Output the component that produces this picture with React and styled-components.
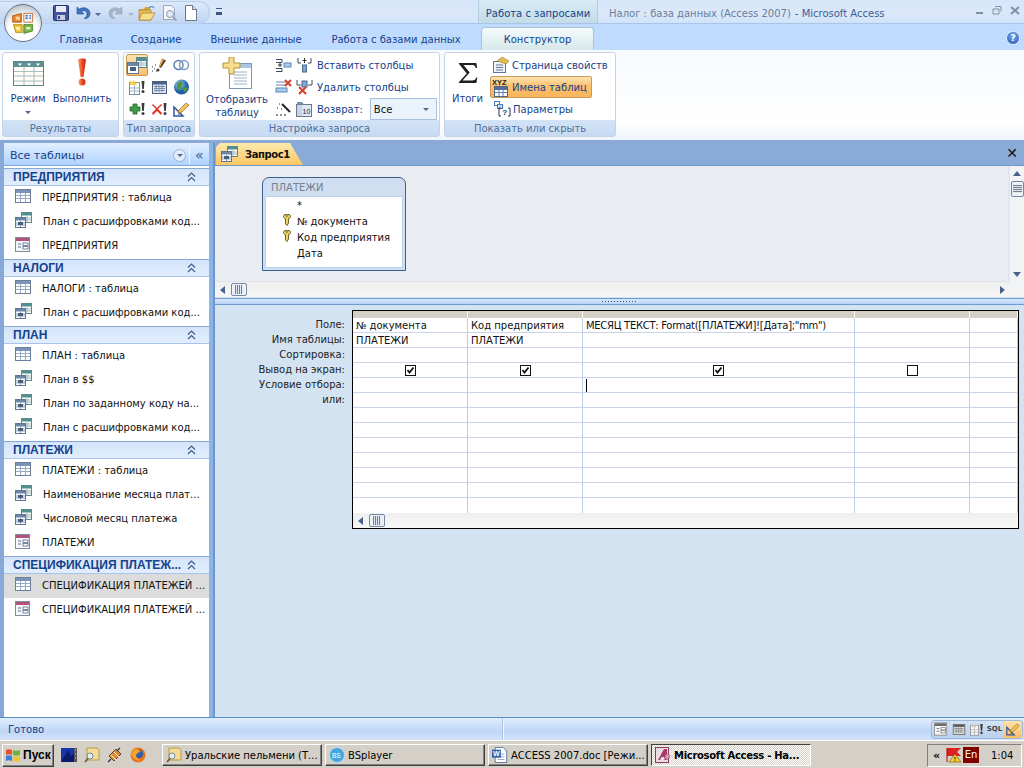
import styled, { createGlobalStyle } from "styled-components"

const FONT = `"DejaVu Sans", "Noto Sans", sans-serif`

const GlobalStyle = createGlobalStyle`
    html, body {
        margin: 0;
        padding: 0;
        width: 1024px;
        height: 768px;
        overflow: hidden;
        background: #d4e3f2;
    }
    * { box-sizing: border-box; }
`

/* ---------- icons ---------- */

const TableIcon = ({ size = 16 }) => (
    <svg width={size} height={size * 14 / 16} viewBox="0 0 16 14">
        <rect x=".5" y=".5" width="15" height="13" fill="#fff" stroke="#6a7f9c" />
        <rect x="1" y="1" width="14" height="3" fill="#7d93b8" />
        <path d="M1 6.500h14M1 9.500h14M5.500 4v9M10.500 4v9" stroke="#9aaac4" />
    </svg>
)

const QueryIcon = () => (
    <svg width="17" height="16" viewBox="0 0 17 16">
        <rect x="6.500" y=".5" width="10" height="10" fill="#fff" stroke="#5a8a8e" />
        <rect x="7" y="1" width="9" height="2.500" fill="#4f8f90" />
        <path d="M12 4v6M7 6h9M7 8h9" stroke="#9fb7bb" />
        <rect x=".5" y="5.500" width="10" height="10" fill="#fff" stroke="#5f7594" />
        <rect x="1" y="6" width="9" height="2.500" fill="#6d86a8" />
        <path d="M5.500 9v6M1 11h9M1 13h9" stroke="#8d9fb8" />
        <rect x="3" y="10" width="5" height="3" fill="#46607f" />
    </svg>
)

const FormIcon = () => (
    <svg width="16" height="15" viewBox="0 0 16 15">
        <rect x=".5" y=".5" width="14" height="14" fill="#f6f7fa" stroke="#7d8ba3" />
        <rect x="1" y="1" width="13" height="3" fill="#b0527a" />
        <path d="M3 7h3M3 10h3" stroke="#5a6c88" />
        <rect x="8" y="6" width="5" height="2.500" fill="#fff" stroke="#5a6c88" strokeWidth=".8" />
        <rect x="8" y="9.500" width="5" height="2.500" fill="#fff" stroke="#5a6c88" strokeWidth=".8" />
    </svg>
)

const KeyIcon = () => (
    <svg width="8" height="12" viewBox="0 0 8 12">
        <path d="M.5 2.500a3.300 2.200 0 0 1 7 0c0 1.100-.8 1.900-2 2.200V9L4 11.500 2.500 10V4.700C1.300 4.400.5 3.600.5 2.500z" fill="#efd266" stroke="#5f5018" strokeWidth=".9" />
        <path d="M2.800 2h2.400" stroke="#5f5018" />
    </svg>
)

const Excl = ({ x = 0, y = 0 }) => (
    <g transform={`translate(${x} ${y})`}>
        <path d="M1 0h3L3.300 8H1.700z" fill="#3c3c3c" />
        <circle cx="2.500" cy="10.500" r="1.500" fill="#3c3c3c" />
    </g>
)

const Small = ({ children, w = 17, h = 16 }) => (
    <svg width={w} height={h} viewBox={`0 0 ${w} ${h}`}>{children}</svg>
)

const ViewBigIcon = () => (
    <svg width="31" height="25" viewBox="0 0 31 25">
        <rect x=".5" y=".5" width="30" height="24" fill="#fffdf6" stroke="#5f8488" />
        <rect x="1" y="1" width="29" height="5" fill="#5f9295" />
        <path d="M5 2.500h4L7 5zM14 2.500h4L16 5zM23 2.500h4L25 5z" fill="#fff" />
        <path d="M1 10.500h29M1 15h29M1 20h29M11 6v18M21 6v18" stroke="#a9bcc0" />
    </svg>
)

const RunIcon = () => (
    <svg width="12" height="28" viewBox="0 0 12 28">
        <defs>
            <linearGradient id="red" x1="0" x2="1">
                <stop offset="0" stopColor="#f9a070" />
                <stop offset=".6" stopColor="#e8401c" />
                <stop offset="1" stopColor="#c22a10" />
            </linearGradient>
        </defs>
        <path d="M2 1.500C2 0 10 0 10 1.500L7.500 19h-3z" fill="url(#red)" />
        <circle cx="6" cy="24" r="3.500" fill="url(#red)" />
    </svg>
)

const ShowTableIcon = () => (
    <svg width="30" height="32" viewBox="0 0 30 32">
        <rect x="7.500" y="6.500" width="22" height="25" fill="#fff" stroke="#7a96b8" />
        <rect x="8" y="7" width="21" height="4" fill="#a9c8e8" />
        <path d="M12 15h13M12 18h13M12 21h13M12 24h13M12 27h13" stroke="#9db0c8" />
        <path d="M7 0h5v6h6v5h-6v6H7v-6H1V6h6z" fill="#f6de8e" stroke="#b39334" />
    </svg>
)

const SigmaIcon = () => (
    <svg width="20" height="22" viewBox="0 0 24 26">
        <path d="M1 1h21l1 6h-1.500C20.500 4 19 3.500 16 3.500H6.500l7.500 9-8.500 9.500H17c3 0 4.200-1 5-3.500h1.200L22 25H1v-1l9.500-10.500L1 2z" fill="#1f1f1f" />
    </svg>
)

const SelectIcon = () => (
    <Small w="20" h="17">
        <rect x="9.500" y=".5" width="10" height="10" fill="#fff" stroke="#5a8a8e" />
        <rect x="10" y="1" width="9" height="3" fill="#4f8f90" />
        <path d="M10 6h9M10 8h9M14 4v6" stroke="#9fb7bb" />
        <rect x=".5" y="5.500" width="11" height="11" fill="#fff" stroke="#5f7594" />
        <rect x="1" y="6" width="10" height="3" fill="#6d86a8" />
        <rect x="3" y="10" width="6" height="4" fill="#46607f" />
    </Small>
)

const WandExcl = () => (
    <Small>
        <path d="M1 14h1M3 12h1M1 10h1M5 14h1M4 8h1" stroke="#333" />
        <path d="M11 1.500l4 2L10 11l-2-1z" fill="#4a4038" />
        <path d="M11 1.500l2 1-4 7.500-1-.5z" fill="#e8a848" />
        <circle cx="7" cy="13" r="1.500" fill="#4a4038" />
    </Small>
)

const RingsIcon = () => (
    <Small>
        <circle cx="5.500" cy="8" r="4.500" fill="none" stroke="#5f82ad" strokeWidth="1.500" />
        <circle cx="11" cy="8" r="4.500" fill="none" stroke="#7f9cc0" strokeWidth="1.500" />
    </Small>
)

const MakeTableIcon = () => (
    <Small>
        <rect x=".5" y="3.500" width="10" height="12" fill="#fff" stroke="#7a8ea8" />
        <path d="M1 9h9M1 12h9M5.500 6v9" stroke="#9fb0c6" />
        <path d="M1 1l2 2 2-2 1 3 3-1-2 3H1z" fill="#f2cf55" />
        <Excl x="11.500" y="2" />
    </Small>
)

const CalendarIcon = () => (
    <Small>
        <rect x="1.500" y="2.500" width="14" height="12" fill="#dfe6f2" stroke="#4d5f80" />
        <rect x="2" y="3" width="13" height="2.500" fill="#46608a" />
        <path d="M3 7.500h11M3 9.500h11M3 11.500h11M5 6v7M8 6v7M11 6v7" stroke="#7d90ae" />
    </Small>
)

const GlobeIcon = () => (
    <Small>
        <defs>
            <radialGradient id="gl" cx=".35" cy=".3">
                <stop offset="0" stopColor="#a8d8f2" />
                <stop offset="1" stopColor="#1f5fa8" />
            </radialGradient>
        </defs>
        <circle cx="8.500" cy="8" r="7.500" fill="url(#gl)" />
        <path d="M4 4l4-2 2 3-2 2 1 3-3 1-2-3zM10 10l3-2 2 1-2 4-2 0z" fill="#4c9a3c" />
    </Small>
)

const PlusExcl = () => (
    <Small>
        <path d="M4 3h4v3h3v4H8v3H4v-3H1V6h3z" fill="#3f9a46" stroke="#23602a" strokeWidth=".8" />
        <Excl x="11.500" y="2" />
    </Small>
)

const CrossExcl = () => (
    <Small>
        <path d="M2 3l4 4 4-4 1 1-4 4 4 4-1 2-4-4-4 4-1-2 4-4-4-4z" fill="#df3324" />
        <Excl x="11.500" y="2" />
    </Small>
)

const PencilTri = () => (
    <Small>
        <path d="M1 15V6l9 9z" fill="none" stroke="#31579b" strokeWidth="1.500" />
        <path d="M5 13h2" stroke="#31579b" />
        <path d="M6 9l7-7 3 2-7 7-4 1z" fill="#f0c560" stroke="#8a6a20" strokeWidth=".7" />
    </Small>
)

const InsertRowsIcon = () => (
    <Small>
        <path d="M1 2.500h6v3H1M1 11.500h6v3H1" fill="none" stroke="#3a4a60" />
        <path d="M3 8h4M5 6v4" stroke="#333" />
        <rect x="9" y="6" width="7" height="4" fill="#a8cdf0" stroke="#5f86b5" />
    </Small>
)

const InsertColsIcon = () => (
    <Small>
        <path d="M2 1v5h3M15 1v5h-3" fill="none" stroke="#3a4a60" />
        <path d="M8.500 1v5M6.500 3.500h4" stroke="#333" />
        <rect x="6.500" y="8" width="4" height="7" fill="#7ea6d6" stroke="#4a6a96" />
    </Small>
)

const DeleteRowsIcon = () => (
    <Small>
        <path d="M1 3h10M1 6h10" stroke="#6a86aa" />
        <rect x="1" y="9" width="11" height="4" fill="#a8cdf0" stroke="#5f86b5" />
        <path d="M10 1l6 6M16 1l-6 6" stroke="#d8402a" strokeWidth="2" />
    </Small>
)

const DeleteColsIcon = () => (
    <Small>
        <path d="M1 1v5h4M16 1v5h-4" fill="none" stroke="#3a4a60" />
        <rect x="6" y="2" width="5" height="6" fill="#7ea6d6" stroke="#4a6a96" />
        <path d="M3 8l7 7M10 8l-7 7" stroke="#d8402a" strokeWidth="2" />
    </Small>
)

const WandIcon = () => (
    <Small>
        <path d="M7 3l8 8" stroke="#222" strokeWidth="2" />
        <path d="M4 3h1M2 7h1M6 8h1M1 14h2M5 14h2M9 14h2" stroke="#222" />
    </Small>
)

const ReturnIcon = () => (
    <Small>
        <rect x=".5" y="3.500" width="15" height="12" fill="#dfe8f4" stroke="#66788f" />
        <rect x="1" y="4" width="5" height="11" fill="#c8d5e6" />
        <text x="6.500" y="13" fontSize="7" fontFamily="Liberation Sans" fill="#223">10</text>
        <path d="M1 1h5l2 2.500H1z" fill="#7c8ea8" />
    </Small>
)

const PropsIcon = () => (
    <Small>
        <rect x=".5" y="4.500" width="12" height="11" fill="#f2f6fb" stroke="#5f7594" />
        <path d="M3 8h7M3 10.500h7M3 13h7" stroke="#5f7594" />
        <path d="M4 4L9 0l7 4-3 3z" fill="#e2bd52" stroke="#9b7a28" strokeWidth=".6" />
    </Small>
)

const NamesIcon = () => (
    <svg width="17" height="19" viewBox="0 0 17 19">
        <text x="0" y="7" fontSize="7.500" fontWeight="700" fontFamily="Liberation Sans" fill="#222">XYZ</text>
        <rect x="2.500" y="8.500" width="13" height="10" fill="#fff" stroke="#4f6486" />
        <rect x="3" y="9" width="12" height="3" fill="#4f6f9e" />
        <path d="M3 14.500h12M7 12v6M11 12v6" stroke="#6580a8" />
    </svg>
)

const ParamsIcon = () => (
    <Small w="18" h="16">
        <rect x="1.500" y=".5" width="5" height="4" fill="#fff" stroke="#4f7ab0" />
        <rect x="4.500" y="3.500" width="5" height="4" fill="#c6dcf2" stroke="#4f7ab0" />
        <path d="M8 7H6v8h2M15 7h2v8h-2" fill="none" stroke="#23365a" />
        <text x="9.300" y="14" fontSize="8" fontWeight="700" fontFamily="Liberation Sans" fill="#23365a">?</text>
    </Small>
)

const OfficeLogo = () => (
    <svg width="24" height="24" viewBox="0 0 30 30">
        <path d="M2 6l11-3v11H2z" fill="#e8842a" stroke="#a84e10" />
        <path d="M16 3h11v11H16z" fill="#f3f3f3" stroke="#c05a18" />
        <path d="M3 17h11v10H6z" fill="#eec23a" stroke="#b58910" />
        <path d="M16 17h11v8l-11 3z" fill="#7cb648" stroke="#3f7c20" />
        <path d="M18 6h3M23 6h2M18 9h3M23 9h2" stroke="#3b77b8" strokeWidth="2" />
        <path d="M6 7h5v4H6z" fill="#f8d5a0" />
        <path d="M6 20h5v4H7z" fill="#fff1b8" />
        <path d="M19 20h5v3h-5z" fill="#e4f2c2" />
    </svg>
)

const SaveIcon = () => (
    <Small w="16" h="16">
        <rect x=".5" y=".5" width="15" height="15" rx="1" fill="#42559a" stroke="#24336b" />
        <rect x="3" y="1" width="10" height="6" fill="#e9eef8" />
        <rect x="4" y="10" width="8" height="5" fill="#c9d0dc" />
        <rect x="5" y="11" width="2" height="3" fill="#33457f" />
    </Small>
)

const UndoIcon = ({ faded }) => (
    <Small w="16" h="16">
        <path d="M2 2v7h7L6.500 6.500C9 5 12 6 12 9c0 2-1 3-3 4.500 4 .5 6-2 6-5 0-5-6-7.500-10.500-4.500z" fill={faded ? "#a6b5c8" : "#3f74c4"} stroke={faded ? "#93a4ba" : "#214e96"} strokeWidth=".6" transform={faded ? "matrix(-1 0 0 1 16 0)" : undefined} />
    </Small>
)

const FolderIcon = () => (
    <Small w="18" h="16">
        <path d="M1 4h5l1-2h5v3H1z" fill="#d9a73a" />
        <path d="M1 5h12v10H1z" fill="#e8bf5a" stroke="#a67d22" strokeWidth=".7" />
        <path d="M1 15l3-7h13l-4 7z" fill="#f7dd8c" stroke="#a67d22" strokeWidth=".7" />
        <path d="M11 3c2-2 4-2 5 0" fill="none" stroke="#3c7ec0" strokeWidth="1.200" />
    </Small>
)

const PreviewIcon = () => (
    <Small w="16" h="16">
        <path d="M1.500.5h8l3 3v11h-11z" fill="#f7f8fb" stroke="#9aa6b6" />
        <circle cx="8" cy="9" r="3.500" fill="#dfeafa" stroke="#8d9bb0" />
        <path d="M10.500 11.500l4 4" stroke="#8d9bb0" strokeWidth="1.600" />
    </Small>
)

const NewDocIcon = () => (
    <Small w="14" h="16">
        <path d="M1.500.5h7l4 4v11h-11z" fill="#fff" stroke="#6d7684" />
        <path d="M8.500.5v4h4" fill="#dfe4ea" stroke="#6d7684" />
    </Small>
)

const StartFlag = () => (
    <svg width="16" height="15" viewBox="0 0 16 15">
        <path d="M1 2c2-1 4-1 6 0v5c-2-1-4-1-6 0z" fill="#e8502a" />
        <path d="M8 2c2 1 4 1 7 0v5c-3 1-5 1-7 0z" fill="#6fb43a" />
        <path d="M1 8c2-1 4-1 6 0v5c-2-1-4-1-6 0z" fill="#3a7fd6" />
        <path d="M8 8c2 1 4 1 7 0v5c-3 1-5 1-7 0z" fill="#f3c42c" />
    </svg>
)

const QuickMedia = () => (
    <Small w="16" h="16">
        <rect x="0" y="1" width="16" height="14" fill="#1836a8" />
        <path d="M0 15L7 3l3 6 3-3v9z" fill="#0b1a6a" />
        <rect x="13" y="1" width="3" height="14" fill="#555" />
        <path d="M14 3h1M14 7h1M14 11h1" stroke="#ddd" />
    </Small>
)

const SearchFolder = () => (
    <Small w="16" h="16">
        <path d="M3 1h10l2 2v10H3z" fill="#f2dc98" stroke="#b79a4a" />
        <circle cx="6" cy="9" r="3" fill="#dfeefb" stroke="#7f8a94" />
        <path d="M4 11.500l-3 3.500" stroke="#7a5a2a" strokeWidth="1.800" />
    </Small>
)

const Satellite = () => (
    <Small w="16" h="16">
        <path d="M2 9l7-7 5 5-7 7z" fill="#e08a2a" stroke="#333" strokeWidth=".8" />
        <path d="M4 8l5 5M7 5l5 5" stroke="#fff" />
        <path d="M13 1l-3 3M1 15l3-3" stroke="#333" strokeWidth="1.200" />
    </Small>
)

const FoxIcon = () => (
    <Small w="16" h="16">
        <circle cx="8" cy="8" r="7.500" fill="#e8721c" />
        <circle cx="9" cy="7" r="4.200" fill="#2f5fa8" />
        <path d="M1 6c1 5 6 9 11 7-3 0-6-2-6-5 1-2 3-3 5-3-2-2-4-3-6-3z" fill="#f4a52a" />
    </Small>
)

const BsIcon = () => (
    <Small w="16" h="16">
        <circle cx="8" cy="8" r="7.500" fill="#46a6dc" stroke="#b6dcf2" />
        <text x="3" y="10.500" fontSize="6.500" fill="#fff" fontFamily="Liberation Sans">BS</text>
    </Small>
)

const WordIcon = () => (
    <svg width="16" height="16" viewBox="0 0 18 18">
        <path d="M3.500.5h9l4 4v13h-13z" fill="#fff" stroke="#4c6f9c" />
        <path d="M6 8h8M6 11h8M6 14h8" stroke="#86a3c6" />
        <rect x="0" y="3" width="10" height="9" fill="#2f63b0" />
        <text x="1.200" y="10.500" fontSize="8" fontWeight="700" fill="#fff" fontFamily="Liberation Sans">W</text>
    </svg>
)

const AccessIcon = () => (
    <Small w="16" h="18">
        <rect x=".5" y="1.500" width="13" height="15" fill="#eadde3" stroke="#8d3a5e" />
        <path d="M3 14L9 3h3v11h-2.500v-3H6.500L5 14z" fill="#a83a68" />
        <path d="M10 9c2-2 4-1 5 1-1 3-3 4-5 3z" fill="#d69ab5" stroke="#8d3a5e" strokeWidth=".6" />
    </Small>
)

const TrayFlag = () => (
    <Small w="16" h="16">
        <path d="M1 1l14 0-4 4 4 4H1z" fill="#e02020" />
        <path d="M1 1v14" stroke="#a00" />
        <path d="M9 7l6 8H3z" fill="#f4d030" stroke="#7a6a10" strokeWidth=".7" />
        <path d="M9 10v2.500M9 13.500v1" stroke="#222" />
    </Small>
)

const ChevUp = () => (
    <svg width="9" height="10" viewBox="0 0 9 10">
        <path d="M1 4.500l3.500-3.500 3.500 3.500M1 9l3.500-3.500L8 9" fill="none" stroke="#3d5f8c" strokeWidth="1.200" />
    </svg>
)

/* ---------- title and tabs ---------- */

const Page = styled.div`
    position: relative;
    width: 1024px;
    height: 768px;
    display: flex;
    flex-direction: column;
    font-family: ${FONT};
    font-size: 10px;
    overflow: hidden;
    background: #d4e3f2;
`
const OfficeButton = styled.div`
    position: absolute;
    left: 4px;
    top: 4px;
    width: 38px;
    height: 38px;
    border-radius: 50%;
    background: radial-gradient(circle at 50% 70%, #fff 0 45%, #c8ced6 75%, #8b95a2 100%);
    border: 1px solid #6a7686;
    display: flex;
    align-items: center;
    justify-content: center;
    box-shadow: 0 0 0 1px #c6d8ef;
`
const TitleBar = styled.header`
    height: 24px;
    display: flex;
    background: linear-gradient(#d6e6fa, #dbe8f9 50%, #d2e3f9);
    border-bottom: 1px solid #a9c5ea;
`
const QuickBar = styled.div`
    width: 210px;
    height: 23px;
    margin-top: 1px;
    padding-left: 53px;
    display: flex;
    align-items: center;
    gap: 6px;
    background: linear-gradient(#dce9fa, #c0d5f1);
    border-radius: 0 12px 12px 0;
    border: 1px solid #b8cfec;
    border-left: 0;
`
const SmallArrow = styled.span`
    width: 0;
    height: 0;
    border: 3px solid transparent;
    border-bottom: 0;
    border-top: 3px solid ${(props) => props.$color || "#4d6a92"};
    margin: ${(props) => props.$top ?? 3}px ${(props) => props.$gap || 0}px 0 ${(props) => props.$left ?? -2}px;
`
const Customize = styled.span`
    align-self: center;
    margin-left: 6px;
    width: 6px;
    height: 7px;
    border-top: 1px solid #3c5880;
    border-bottom: 3px solid #3c5880;
`
const ContextTitle = styled.div`
    margin-left: 256px;
    width: 120px;
    padding-top: 4px;
    display: flex;
    align-items: center;
    justify-content: center;
    color: #15428b;
    background: linear-gradient(#d8ebf7, #c2dce8);
    border-left: 1px solid #b3cfe0;
    border-right: 1px solid #b3cfe0;
    font-size: 10px;
`
const WindowTitle = styled.div`
    margin-left: 11px;
    padding-top: 4px;
    flex: 1;
    display: flex;
    align-items: center;
    gap: 4px;
    color: #6a7e99;
    span { color: #3b5f96; }
`
const WindowButtons = styled.div`
    display: flex;
    align-items: center;
    gap: 8px;
    padding: 0 4px 3px 0;
`
const TabRow = styled.nav`
    height: 26px;
    display: flex;
    align-items: flex-end;
    padding-left: 46px;
    background: #bfdbff;
`
const Tab = styled.div`
    height: 23px;
    width: ${(props) => props.$w}px;
    display: flex;
    align-items: center;
    justify-content: center;
    color: #15428b;
    white-space: nowrap;
    border: 1px solid transparent;
    border-bottom: 0;
    ${(props) => props.$active && `
        margin-left: 5px;
        background: linear-gradient(#f5fafc, #d6e9ea);
        border-color: #a8c4d4;
        border-radius: 4px 4px 0 0;
    `}
`
const HelpButton = styled.div`
    margin: 0 4px 5px auto;
    width: 14px;
    height: 14px;
    border-radius: 50%;
    background: radial-gradient(circle at 50% 35%, #7fb0f0, #1e4fa8);
    border: 1px solid #dfeaf8;
    color: #fff;
    font-size: 9px;
    font-weight: 700;
    line-height: 12px;
    text-align: center;
`

/* ---------- ribbon ---------- */

const Ribbon = styled.section`
    height: 93px;
    display: flex;
    gap: 4px;
    padding: 2px 2px 3px 2px;
    background: linear-gradient(#f6fafe, #fff 80%, #eef5fc);
    border-bottom: 3px solid #8aa9d6;
`
const Group = styled.div`
    width: ${(props) => props.$w}px;
    display: flex;
    flex-direction: column;
    border: 1px solid #c6d3e2;
    border-radius: 3px;
    background: #fff;
`
const GroupBody = styled.div`
    flex: 1;
    display: flex;
    min-height: 0;
`
const GroupLabel = styled.div`
    height: 16px;
    padding-top: 1px;
    display: flex;
    align-items: center;
    justify-content: center;
    color: #4f6f9c;
    background: linear-gradient(#d3e3f6, #c7daf2);
`
const BigButton = styled.div`
    width: ${(props) => props.$w}px;
    display: flex;
    flex-direction: column;
    align-items: center;
    padding-top: ${(props) => props.$top || 6}px;
    color: #15428b;
    text-align: center;
    line-height: 13px;
    white-space: nowrap;
`
const BigIcon = styled.div`
    flex: none;
    height: ${(props) => props.$h || 27}px;
    margin-bottom: ${(props) => props.$gap ?? 6}px;
    display: flex;
    align-items: flex-end;
    justify-content: center;
`
const IconGrid = styled.div`
    display: grid;
    grid-template-columns: 22px 23px 20px;
    grid-auto-rows: 22px;
    padding: 1px 0 0 2px;
`
const IconCell = styled.div`
    display: flex;
    align-items: center;
    justify-content: center;
    ${(props) => props.$active && `
        background: linear-gradient(#fde2b0, #fbbf6a);
        border: 1px solid #c79b55;
        border-radius: 2px;
    `}
`
const SmallColumn = styled.div`
    display: flex;
    flex-direction: column;
    align-items: flex-start;
    padding-top: 1px;
`
const SmallRow = styled.div`
    height: 22px;
    display: flex;
    align-items: center;
    gap: ${(props) => props.$gap ?? 4}px;
    padding-left: ${(props) => props.$pad ?? 1}px;
    color: #15428b;
    white-space: nowrap;
    ${(props) => props.$active && `
        width: 102px;
        background: linear-gradient(#fde4b4, #fbc06e 45%, #f9b55a);
        border: 1px solid #c79b55;
        border-radius: 2px;
    `}
`
const Select = styled.div`
    width: 67px;
    height: 22px;
    margin-left: 3px;
    padding: 0 7px 0 3px;
    display: flex;
    align-items: center;
    justify-content: space-between;
    color: #111;
    background: #eaf2fc;
    border: 1px solid #a8c0de;
`

/* ---------- navigation pane ---------- */

const Workspace = styled.div`
    flex: 1;
    display: flex;
    min-height: 0;
`
const NavPane = styled.aside`
    flex: none;
    width: 215px;
    display: flex;
    flex-direction: column;
    background: #8db4e6;
    border-left: 4px solid #87a9d8;
    border-right: 2px solid #6d97cc;
`
const NavHeader = styled.div`
    height: 23px;
    margin-right: 4px;
    padding: 2px 0 0 6px;
    display: flex;
    align-items: center;
    font-size: 11px;
    color: #15428b;
    background: linear-gradient(#e3efff, #afd2ff);
    border-bottom: 1px solid #7fa7da;
`
const CircleDown = styled.span`
    margin-left: auto;
    width: 13px;
    height: 13px;
    border-radius: 50%;
    background: #e4edf7;
    border: 1px solid #9cb3cf;
    display: flex;
    align-items: center;
    justify-content: center;
`
const NavCollapse = styled.span`
    margin-left: 3px;
    padding-left: 5px;
    width: 20px;
    border-left: 1px solid #f0f6ff;
    font-size: 14px;
    line-height: 18px;
    color: #3d5f8c;
`
const NavList = styled.div`
    flex: 1;
    margin-right: 4px;
    padding-top: 1px;
    background: #fff;
`
const NavGroupHead = styled.div`
    height: 18px;
    margin-top: 1px;
    padding: 0 13px 0 9px;
    display: flex;
    align-items: center;
    justify-content: space-between;
    font-family: "Liberation Sans", sans-serif;
    font-size: 12px;
    font-weight: 700;
    color: #15428b;
    white-space: nowrap;
    background: linear-gradient(#d3e4fb, #e2eefe);
    border-top: 1px solid #86a9d4;
    border-bottom: 1px solid #a7c5ec;
`
const NavItem = styled.div`
    height: 24px;
    padding: 0 0 2px 11px;
    display: flex;
    align-items: center;
    gap: 11px;
    color: #111;
    white-space: nowrap;
    background: ${(props) => (props.$selected ? "#dcdcdc" : "transparent")};
    svg {
        flex: none;
        margin-bottom: 2px;
    }
`

/* ---------- query designer ---------- */

const Designer = styled.main`
    flex: 1;
    min-width: 0;
    display: flex;
    flex-direction: column;
`
const DocTabs = styled.div`
    height: 23px;
    padding-left: 1px;
    display: flex;
    justify-content: space-between;
    background: #8aabd8;
    border-bottom: 1px solid #6f97cc;
`
const DocTab = styled.div`
    width: 88px;
    padding-left: 5px;
    display: flex;
    align-items: center;
    gap: 7px;
    font-weight: 700;
    letter-spacing: -0.4px;
    color: #111;
    background: linear-gradient(#fdeaae, #fbc663);
    clip-path: polygon(0 4px, 4px 0, 74px 0, 87px 100%, 0 100%);
`
const DocClose = styled.span`
    padding: 3px 6px 0 0;
    font-size: 14px;
    font-weight: 700;
    line-height: 14px;
    color: #111;
`
const UpperPane = styled.section`
    height: 131px;
    display: grid;
    grid-template-columns: 1fr 14px;
    grid-template-rows: 1fr 15px;
    background: #f2f3f4;
`
const Canvas = styled.div`
    padding: 11px 0 0 47px;
    background: #e9edf1;
    border-right: 2px solid #dfe8f2;
    border-bottom: 1px solid #dfe4ea;
`
const FieldList = styled.div`
    width: 144px;
    height: 94px;
    display: flex;
    flex-direction: column;
    border: 1px solid #3e5f8e;
    border-radius: 7px 7px 0 0;
    background: #cfdef1;
`
const FieldListTitle = styled.div`
    height: 19px;
    padding-left: 8px;
    display: flex;
    align-items: center;
    color: #76808e;
`
const FieldRows = styled.div`
    flex: 1;
    margin: 0 3px 3px;
    background: #fff;
    box-shadow: 0 0 0 1px #b8d0ec;
`
const FieldRow = styled.div`
    height: 16px;
    padding-left: 31px;
    position: relative;
    display: flex;
    align-items: center;
    color: #111;
    svg {
        position: absolute;
        left: 17px;
        top: 1px;
    }
`
const ScrollV = styled.div`
    grid-column: 2;
    grid-row: 1 / span 2;
    display: flex;
    flex-direction: column;
    align-items: center;
    padding-top: 5px;
`
const ArrowUp = styled.span`
    width: 0;
    height: 0;
    border: 4.5px solid transparent;
    border-top: 0;
    border-bottom: 5px solid #47618f;
`
const ArrowDown = styled.span`
    width: 0;
    height: 0;
    margin-top: 75px;
    border: 4.5px solid transparent;
    border-bottom: 0;
    border-top: 5px solid #47618f;
`
const ThumbV = styled.div`
    width: 13px;
    height: 16px;
    margin: 5px 0 0 1px;
    background: repeating-linear-gradient(#75808f 0 1px, #dfe7f2 1px 2px) center / 9px 8px no-repeat, #edf2f9;
    border: 1px solid #77879d;
    border-radius: 2px;
`
const ScrollH = styled.div`
    display: flex;
    align-items: center;
    padding: 0 5px 0 5px;
    background: linear-gradient(#f0f0f0, #f6f6f6);
`
const ArrowLeft = styled.span`
    width: 0;
    height: 0;
    border: 4.5px solid transparent;
    border-left: 0;
    border-right: 5px solid #47618f;
`
const ArrowRight = styled.span`
    width: 0;
    height: 0;
    margin-left: auto;
    border: 4.5px solid transparent;
    border-right: 0;
    border-left: 5px solid #47618f;
`
const ThumbH = styled.div`
    width: 16px;
    height: 13px;
    margin-left: 6px;
    background: repeating-linear-gradient(90deg, #75808f 0 1px, #dfe7f2 1px 2px) center / 8px 9px no-repeat, #edf2f9;
    border: 1px solid #77879d;
    border-radius: 2px;
`
const Splitter = styled.div`
    height: 7px;
    margin-top: 1px;
    display: flex;
    justify-content: center;
    align-items: center;
    background: linear-gradient(#d8e8fd, #b8d4f8);
    border-top: 1px solid #6f9bd0;
    border-bottom: 1px solid #6f9bd0;
    &::after {
        content: "";
        width: 36px;
        height: 1px;
        background: repeating-linear-gradient(90deg, #44556d 0 1px, transparent 1px 3px);
    }
`
const LowerPane = styled.section`
    flex: 1;
    display: flex;
    padding-top: 5px;
    background: #d4e3f2;
`
const RowLabels = styled.div`
    width: 137px;
    padding: 8px 7px 0 0;
    display: flex;
    flex-direction: column;
`
const RowLabel = styled.div`
    height: 15px;
    line-height: 14px;
    text-align: right;
    color: #222;
    white-space: nowrap;
`
const GridBox = styled.div`
    width: 667px;
    height: 219px;
    display: flex;
    flex-direction: column;
    background: #fff;
    border: 1px solid #000;
`
const GridBody = styled.div`
    display: grid;
    grid-template-columns: 115px 115px 272px 115px 48px;
    grid-template-rows: 7px;
    grid-auto-rows: 15px;
`
const GridHead = styled.div`
    background: #d4d0c8;
    border-right: 1px solid #fff;
`
const Cell = styled.div`
    padding: 0 3px;
    display: flex;
    align-items: center;
    justify-content: ${(props) => (props.$center ? "center" : "flex-start")};
    color: #111;
    white-space: nowrap;
    overflow: hidden;
    letter-spacing: ${(props) => (props.$tight ? "-0.29px" : "normal")};
    border-right: 1px solid #bccde4;
    border-bottom: ${(props) => (props.$last ? "0" : "1px solid #c9d5e6")};
`
const Caret = styled.span`
    width: 1px;
    height: 13px;
    background: #000;
`
const Check = styled.span`
    width: 11px;
    height: 11px;
    display: flex;
    background: #fff;
    border: 1px solid #111;
`
const GridScroll = styled(ScrollH)`
    flex: 1;
`

/* ---------- status bar and taskbar ---------- */

const StatusBar = styled.footer`
    height: 23px;
    display: flex;
    align-items: center;
    padding-left: 8px;
    color: #15428b;
    background: linear-gradient(#e0edfd, #c0d6f6 60%, #d2e3fa);
    border-top: 1px solid #5d8cc5;
`
const StatusDivider = styled.span`
    margin-left: 458px;
    width: 1px;
    height: 22px;
    background: #a9c2e4;
    box-shadow: 1px 0 0 #eef5fe;
`
const ViewButtons = styled.div`
    margin-left: auto;
    margin-right: 1px;
    height: 19px;
    display: flex;
    border: 1px solid #9db8da;
    border-radius: 3px;
    overflow: hidden;
    background: linear-gradient(#d4e3f6, #b8cfee);
`
const ViewButton = styled.div`
    width: 18px;
    display: flex;
    align-items: center;
    justify-content: center;
    font-size: 7px;
    font-weight: 700;
    color: #444;
    border-right: 1px solid #c6d7ee;
    ${(props) => props.$active && "background: linear-gradient(#fde2b0, #fbc063);"}
    svg {
        width: 14px;
        height: 14px;
        ${(props) => !props.$active && "filter: grayscale(1);"}
    }
`
const Taskbar = styled.footer`
    height: 28px;
    display: flex;
    align-items: center;
    padding: 1px 2px 0;
    background: #d4d0c8;
    border-top: 1px solid #fff;
    font-size: 10px;
`
const raised = `
    border-top: 1px solid #fff;
    border-left: 1px solid #fff;
    border-right: 1px solid #404040;
    border-bottom: 1px solid #404040;
    box-shadow: inset -1px -1px 0 #808080;
`
const StartButton = styled.div`
    width: 52px;
    height: 23px;
    display: flex;
    align-items: center;
    gap: 2px;
    padding-left: 2px;
    font-family: "Liberation Sans", sans-serif;
    font-size: 12px;
    font-weight: 700;
    color: #000;
    ${raised}
`
const QuickLaunch = styled.div`
    width: 108px;
    padding-left: 7px;
    display: flex;
    align-items: center;
    gap: 7px;
`
const TaskButton = styled.div`
    width: 160px;
    height: 22px;
    margin-right: 3px;
    padding: 0 3px;
    display: flex;
    align-items: center;
    gap: 3px;
    white-space: nowrap;
    overflow: hidden;
    color: #000;
    ${(props) => (props.$active ? `
        font-weight: 700;
        letter-spacing: -0.3px;
        border-top: 1px solid #404040;
        border-left: 1px solid #404040;
        border-right: 1px solid #fff;
        border-bottom: 1px solid #fff;
        background: repeating-conic-gradient(#fff 0 25%, #d4d0c8 0 50%) 0 0 / 2px 2px;
    ` : raised)}
    svg { flex: none; }
`
const Tray = styled.div`
    width: 95px;
    height: 23px;
    margin-left: auto;
    padding-left: 5px;
    display: flex;
    align-items: center;
    gap: 3px;
    border: 1px solid;
    border-color: #808080 #fff #fff #808080;
`
const TrayMore = styled.b`
    width: 10px;
    font-size: 11px;
`
const Lang = styled.span`
    width: 16px;
    height: 16px;
    margin-left: -2px;
    color: #fff;
    background: #7e0000;
    font-size: 10px;
    line-height: 16px;
    text-align: center;
`
const Clock = styled.span`
    margin-left: 9px;
`

/* ---------- data ---------- */

const groups = [
    { title: "ПРЕДПРИЯТИЯ", items: [["t", "ПРЕДПРИЯТИЯ : таблица"], ["q", "План с расшифровками код..."], ["f", "ПРЕДПРИЯТИЯ"]] },
    { title: "НАЛОГИ", items: [["t", "НАЛОГИ : таблица"], ["q", "План с расшифровками код..."]] },
    { title: "ПЛАН", items: [["t", "ПЛАН : таблица"], ["q", "План в $$"], ["q", "План по заданному коду на..."], ["q", "План с расшифровками код..."]] },
    { title: "ПЛАТЕЖИ", items: [["t", "ПЛАТЕЖИ : таблица"], ["q", "Наименование месяца плат..."], ["q", "Числовой месяц платежа"], ["f", "ПЛАТЕЖИ"]] },
    { title: "СПЕЦИФИКАЦИЯ ПЛАТЕЖ...", items: [["t", "СПЕЦИФИКАЦИЯ ПЛАТЕЖЕЙ ...", true], ["f", "СПЕЦИФИКАЦИЯ ПЛАТЕЖЕЙ ..."]] },
]

const navIcons = { t: TableIcon, q: QueryIcon, f: FormIcon }

const rowNames = ["Поле:", "Имя таблицы:", "Сортировка:", "Вывод на экран:", "Условие отбора:", "или:"]

const columns = [0, 1, 2, 3, 4]

const cells = [
    ["№ документа", "Код предприятия", "МЕСЯЦ ТЕКСТ: Format([ПЛАТЕЖИ]![Дата];\"mm\")", "", ""],
    ["ПЛАТЕЖИ", "ПЛАТЕЖИ", "", "", ""],
    ["", "", "", "", ""],
]

const CheckMark = ({ on }) => (
    <Check>
        {on && (
            <svg width="9" height="9" viewBox="0 0 9 9">
                <path d="M1.500 4l2 2.500L7.500 1.500" fill="none" stroke="#111" strokeWidth="1.800" />
            </svg>
        )}
    </Check>
)

export default function App() {
    return (
        <Page>
            <GlobalStyle />
            <OfficeButton><OfficeLogo /></OfficeButton>

            <TitleBar>
                <QuickBar>
                    <SaveIcon />
                    <UndoIcon />
                    <SmallArrow $gap="1" />
                    <UndoIcon faded />
                    <SmallArrow $color="#a6b5c8" $gap="-2" />
                    <FolderIcon />
                    <PreviewIcon />
                    <NewDocIcon />
                </QuickBar>
                <Customize />
                <ContextTitle>Работа с запросами</ContextTitle>
                <WindowTitle>Налог : база данных (Access 2007) <span>- Microsoft Access</span></WindowTitle>
                <WindowButtons>
                    <svg width="9" height="9" viewBox="0 0 9 9"><path d="M1 7h7" stroke="#7f90a8" strokeWidth="2" /></svg>
                    <svg width="10" height="9" viewBox="0 0 10 9"><path d="M3 .5h6v5M1 3h6v5H1z" fill="none" stroke="#7f90a8" /></svg>
                    <svg width="10" height="9" viewBox="0 0 10 9"><path d="M1 1l8 7M9 1L1 8" stroke="#7f90a8" strokeWidth="2" /></svg>
                </WindowButtons>
            </TitleBar>

            <TabRow>
                <Tab $w="70">Главная</Tab>
                <Tab $w="80">Создание</Tab>
                <Tab $w="120">Внешние данные</Tab>
                <Tab $w="160">Работа с базами данных</Tab>
                <Tab $w="113" $active>Конструктор</Tab>
                <HelpButton>?</HelpButton>
            </TabRow>

            <Ribbon>
                <Group $w="117">
                    <GroupBody>
                        <BigButton $w="50">
                            <BigIcon><ViewBigIcon /></BigIcon>
                            Режим
                            <SmallArrow $top="6" $left="0" />
                        </BigButton>
                        <BigButton $w="58">
                            <BigIcon><RunIcon /></BigIcon>
                            Выполнить
                        </BigButton>
                    </GroupBody>
                    <GroupLabel>Результаты</GroupLabel>
                </Group>

                <Group $w="72">
                    <GroupBody>
                        <IconGrid>
                            <IconCell $active><SelectIcon /></IconCell>
                            <IconCell><WandExcl /></IconCell>
                            <IconCell><RingsIcon /></IconCell>
                            <IconCell><MakeTableIcon /></IconCell>
                            <IconCell><CalendarIcon /></IconCell>
                            <IconCell><GlobeIcon /></IconCell>
                            <IconCell><PlusExcl /></IconCell>
                            <IconCell><CrossExcl /></IconCell>
                            <IconCell><PencilTri /></IconCell>
                        </IconGrid>
                    </GroupBody>
                    <GroupLabel>Тип запроса</GroupLabel>
                </Group>

                <Group $w="241">
                    <GroupBody>
                        <BigButton $w="74" $top="4">
                            <BigIcon $h="32" $gap="4"><ShowTableIcon /></BigIcon>
                            Отобразить
                            <br />
                            таблицу
                        </BigButton>
                        <SmallColumn>
                            <SmallRow $gap="4"><InsertRowsIcon /><InsertColsIcon />Вставить столбцы</SmallRow>
                            <SmallRow $gap="4"><DeleteRowsIcon /><DeleteColsIcon />Удалить столбцы</SmallRow>
                            <SmallRow $gap="4"><WandIcon /><ReturnIcon />Возврат:<Select>Все<SmallArrow $top="1" /></Select></SmallRow>
                        </SmallColumn>
                    </GroupBody>
                    <GroupLabel>Настройка запроса</GroupLabel>
                </Group>

                <Group $w="172">
                    <GroupBody>
                        <BigButton $w="45" $top="9">
                            <BigIcon $h="22" $gap="8"><SigmaIcon /></BigIcon>
                            Итоги
                        </BigButton>
                        <SmallColumn>
                            <SmallRow $gap="2" $pad="3"><PropsIcon />Страница свойств</SmallRow>
                            <SmallRow $gap="3" $active><NamesIcon />Имена таблиц</SmallRow>
                            <SmallRow $gap="2" $pad="3"><ParamsIcon />Параметры</SmallRow>
                        </SmallColumn>
                    </GroupBody>
                    <GroupLabel>Показать или скрыть</GroupLabel>
                </Group>
            </Ribbon>

            <Workspace>
                <NavPane>
                    <NavHeader>
                        Все таблицы
                        <CircleDown><SmallArrow $top="1" $left="0" /></CircleDown>
                        <NavCollapse>«</NavCollapse>
                    </NavHeader>
                    <NavList>
                        {groups.map((group) => (
                            <div key={group.title}>
                                <NavGroupHead>{group.title}<ChevUp /></NavGroupHead>
                                {group.items.map(([kind, name, selected], i) => {
                                    const Icon = navIcons[kind]
                                    return (
                                        <NavItem key={i} $selected={selected}>
                                            <Icon />
                                            {name}
                                        </NavItem>
                                    )
                                })}
                            </div>
                        ))}
                    </NavList>
                </NavPane>

                <Designer>
                    <DocTabs>
                        <DocTab><QueryIcon />Запрос1</DocTab>
                        <DocClose>✕</DocClose>
                    </DocTabs>
                    <UpperPane>
                        <Canvas>
                            <FieldList>
                                <FieldListTitle>ПЛАТЕЖИ</FieldListTitle>
                                <FieldRows>
                                    <FieldRow>*</FieldRow>
                                    <FieldRow><KeyIcon />№ документа</FieldRow>
                                    <FieldRow><KeyIcon />Код предприятия</FieldRow>
                                    <FieldRow>Дата</FieldRow>
                                </FieldRows>
                            </FieldList>
                        </Canvas>
                        <ScrollV>
                            <ArrowUp />
                            <ThumbV />
                            <ArrowDown />
                        </ScrollV>
                        <ScrollH>
                            <ArrowLeft />
                            <ThumbH />
                            <ArrowRight />
                        </ScrollH>
                    </UpperPane>
                    <Splitter />
                    <LowerPane>
                        <RowLabels>
                            {rowNames.map((name) => <RowLabel key={name}>{name}</RowLabel>)}
                        </RowLabels>
                        <GridBox>
                            <GridBody>
                                {columns.map((c) => <GridHead key={c} />)}
                                {cells.flatMap((row, r) => row.map((text, c) => (
                                    <Cell key={`${r}-${c}`} $tight={c === 2}>{text}</Cell>
                                )))}
                                {[true, true, true, false].map((on, c) => (
                                    <Cell key={c} $center><CheckMark on={on} /></Cell>
                                ))}
                                <Cell />
                                <Cell /><Cell /><Cell><Caret /></Cell><Cell /><Cell />
                                {Array.from({ length: 35 }, (_, i) => <Cell key={`b${i}`} />)}
                                {columns.map((c) => <Cell key={`e${c}`} $last />)}
                            </GridBody>
                            <GridScroll>
                                <ArrowLeft />
                                <ThumbH />
                            </GridScroll>
                        </GridBox>
                    </LowerPane>
                </Designer>
            </Workspace>

            <StatusBar>
                Готово
                <StatusDivider />
                <ViewButtons>
                    <ViewButton><FormIcon /></ViewButton>
                    <ViewButton><CalendarIcon /></ViewButton>
                    <ViewButton><MakeTableIcon /></ViewButton>
                    <ViewButton>SQL</ViewButton>
                    <ViewButton $active><PencilTri /></ViewButton>
                </ViewButtons>
            </StatusBar>

            <Taskbar>
                <StartButton><StartFlag />Пуск</StartButton>
                <QuickLaunch>
                    <QuickMedia />
                    <SearchFolder />
                    <Satellite />
                    <FoxIcon />
                </QuickLaunch>
                <TaskButton><SearchFolder />Уральские пельмени (Т...</TaskButton>
                <TaskButton><BsIcon />BSplayer</TaskButton>
                <TaskButton><WordIcon />ACCESS 2007.doc [Режи...</TaskButton>
                <TaskButton $active><AccessIcon />Microsoft Access - На...</TaskButton>
                <Tray>
                    <TrayMore>«</TrayMore>
                    <TrayFlag />
                    <Lang>En</Lang>
                    <Clock>1:04</Clock>
                </Tray>
            </Taskbar>
        </Page>
    )
}
